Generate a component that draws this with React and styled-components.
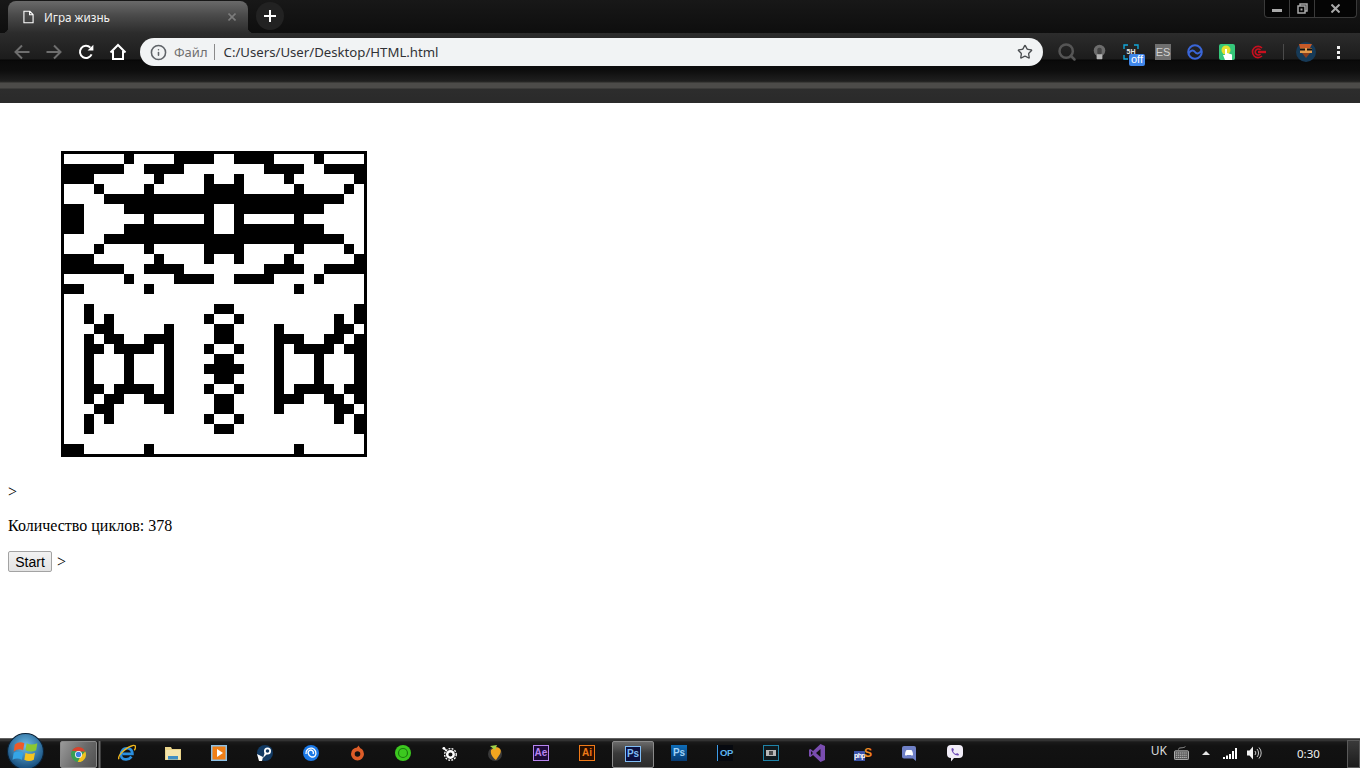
import React from 'react';
import styled, {createGlobalStyle} from 'styled-components';
import {Star, Search, Info} from 'lucide-react';

const GlobalStyle = createGlobalStyle`
    html, body {
        margin: 0;
        padding: 0;
        width: 1360px;
        height: 768px;
        overflow: hidden;
        background: #fff;
    }
`;

// black cells per row of the board, "a-b" is a range of columns
const BOARD = [
    '6 11-14 17-20 25',
    '0-5 8-11 20-23 26-29',
    '0-2 9 14 17 22 29',
    '3 8 14-17 23 28',
    '4-27',
    '0-1 6-14 17-25',
    '0-1 8 14 17 23',
    '0-1 6-14 17-25',
    '4-27',
    '3 8 14-17 23 28',
    '0-2 9 14 17 22 29',
    '0-5 8-11 20-23 26-29',
    '6 11-14 17-20 25',
    '0-1 8 23',
    '',
    '2 15-16 29',
    '2 4 14 17 27 29',
    '3-4 10 15-16 21 27-28',
    '2 4-5 8-10 15-16 21-23 26-27 29',
    '2-3 5-8 10 14 17 21 23-26 28-29',
    '2 6 10 15-16 21 25 29',
    '2 6 10 14-17 21 25 29',
    '2 6 10 15-16 21 25 29',
    '2-3 5-8 10 14 17 21 23-26 28-29',
    '2 4-5 8-10 15-16 21-23 26-27 29',
    '3-4 10 15-16 21 27-28',
    '2 4 14 17 27 29',
    '2 15-16 29',
    '',
    '0-1 8 23',
];

const expandRow = (row) => {
    const cells = new Array(30).fill(false);
    row.split(' ').filter(Boolean).forEach((part) => {
        const [from, to] = part.split('-').map(Number);
        for (let c = from; c <= (to === undefined ? from : to); c++) cells[c] = true;
    });
    return cells;
};

const Back = () => <svg width="18" height="18" viewBox="0 0 18 18" fill="none" stroke="currentColor" strokeWidth="2"><path d="M16.5 9H2.5M9 2.5L2.5 9L9 15.5"/></svg>;
const Forward = () => <svg width="18" height="18" viewBox="0 0 18 18" fill="none" stroke="currentColor" strokeWidth="2"><path d="M1.5 9H15.5M9 2.5L15.5 9L9 15.5"/></svg>;
const Reload = () => <svg width="16" height="16" viewBox="0 0 16 16" fill="none"><path d="M13.6 10.4A6.1 6.1 0 1 1 12.4 3.6" stroke="currentColor" strokeWidth="2"/><path d="M9.6 6.6H15.4V0.8Z" fill="currentColor"/></svg>;
const HomeIcon = () => <svg width="18" height="18" viewBox="0 0 18 18" fill="none" stroke="currentColor" strokeWidth="2"><path d="M1.5 9.5L9 2L16.5 9.5M4 8V16H14V8"/></svg>;
const PageIcon = () => <svg width="11" height="14" viewBox="0 0 12 14" fill="none" stroke="#fff" strokeWidth="1.2"><path d="M1 .8H7.5L11 4.3V13.2H1ZM7.2 .8V4.6H11"/></svg>;
const TabX = () => <svg width="8" height="8" viewBox="0 0 8 8" stroke="#7c7c7c" strokeWidth="1.6"><path d="M.5 .5L7.5 7.5M7.5 .5L.5 7.5"/></svg>;

const Bulb = () => <svg width="13" height="16" viewBox="0 0 18 20"><circle cx="9" cy="8" r="8" fill="#6c6c6c"/><rect x="6" y="4" width="6" height="10" rx="2.5" fill="#444"/><rect x="5" y="13" width="8" height="7" rx="1" fill="#b4b4b4"/></svg>;
const BlueRing = () => <svg width="16" height="16" viewBox="0 0 16 16" fill="none" stroke="#3a66d8" strokeWidth="2"><circle cx="8" cy="8" r="6.8"/><path d="M1.5 9.5C4 5.5 6.5 6 8 8S12 10.5 14.5 6.5"/></svg>;
const TapSquare = () => <svg width="16" height="16" viewBox="0 0 16 16"><rect width="16" height="16" rx="2" fill="#35c77a"/><circle cx="7" cy="6" r="4.5" fill="#e6e02e"/><path d="M6 5H8V9L13 10.5V16H6L4 11H6Z" fill="#fff"/></svg>;
const RedTarget = () => <svg width="16" height="14" viewBox="0 0 16 14" fill="none" stroke="#c80f1e" strokeWidth="1.6"><path d="M11 3A5.6 5.6 0 1 0 11 11"/><path d="M9.5 5A3 3 0 1 0 9.5 9"/><path d="M7 7H15" strokeWidth="2.4"/></svg>;
const Avatar = () => <svg width="20" height="20" viewBox="0 0 20 20"><circle cx="10" cy="10" r="10" fill="#173a57"/><path d="M3 2H16L14 6H4Z" fill="#c65a28"/><rect x="4" y="6" width="12" height="5" fill="#e49a4c"/><rect x="4" y="6.5" width="5" height="2" fill="#111"/><rect x="11" y="6.5" width="5" height="2" fill="#111"/><path d="M6 11H14L10 16Z" fill="#8a3d1e"/></svg>;
const Corners = () => <svg width="16" height="16" viewBox="0 0 16 16" fill="none" stroke="#12a5d8" strokeWidth="1.4"><path d="M1 5V1H5M11 1H15V5M15 11V15H11M5 15H1V11"/></svg>;

const Orb = () => <svg width="37" height="37" viewBox="0 0 36 36"><defs><radialGradient id="orb" cx="50%" cy="35%" r="70%"><stop offset="0" stopColor="#6cbdea"/><stop offset="1" stopColor="#0c3f6e"/></radialGradient></defs><circle cx="18" cy="18" r="17.5" fill="url(#orb)" stroke="#0a2136"/><g transform="translate(18 18) scale(1.15) translate(-18 -18)"><path d="M9 12Q13 9 17 11L16 17Q12 15 8 18Z" fill="#ee5a28"/><path d="M19 11Q23 13 28 11L27 17Q23 19 18 17Z" fill="#8cc832"/><path d="M8 19Q12 17 16 19L15 25Q11 23 7 25Z" fill="#35a5e6"/><path d="M18 19Q22 21 26 19L25 25Q21 27 17 25Z" fill="#f7c41f"/></g></svg>;
const ChromeLogo = () => <svg width="15" height="15" viewBox="0 0 18 18"><circle cx="9" cy="9" r="9" fill="#3a9e52"/><path d="M1.2 4.5A9 9 0 0 1 17.2 5.5H9Z" fill="#d9412f"/><path d="M17.2 5.5A9 9 0 0 1 8 18L11.5 11Z" fill="#f3c01f"/><circle cx="9" cy="9" r="4.2" fill="#fff"/><circle cx="9" cy="9" r="3.2" fill="#3f7fe0"/></svg>;
const IE = () => <svg width="18" height="18" viewBox="0 0 20 20" fill="none"><path d="M5 11H16C16 6 12 4 8 5C4 6 2 12 4 15C6 18 12 18 15 14" stroke="#2b8fde" strokeWidth="3"/><path d="M1 17C-1 12 10 3 17 1.5C21 1 19 6 18 7" stroke="#f0b71c" strokeWidth="1.5"/></svg>;
const Folder = () => <svg width="16" height="16" viewBox="0 0 16 16"><path d="M0 2H6L7 4H16V15H0Z" fill="#e9d48b"/><rect x="1" y="5" width="14" height="9.5" fill="#f4e6ae"/><path d="M3 11H13V14.5H3Z" fill="#3f8fc4"/></svg>;
const Media = () => <svg width="16" height="16" viewBox="0 0 16 16"><rect width="16" height="16" fill="#8cc0e6"/><rect x="1.5" y="1.5" width="13" height="13" fill="#f07f17"/><path d="M6 4L12 8L6 12Z" fill="#fff"/></svg>;
const Steam = () => <svg width="16" height="16" viewBox="0 0 16 16"><circle cx="8" cy="8" r="8" fill="#123a63"/><path d="M0 9L6 12L5 16H2Z" fill="#fff"/><circle cx="10.5" cy="6" r="3.5" fill="#fff"/><circle cx="10.5" cy="6" r="1.8" fill="#123a63"/><path d="M6 13L8 7L10 9Z" fill="#fff"/></svg>;
const Uplay = () => <svg width="16" height="16" viewBox="0 0 16 16" fill="none"><circle cx="8" cy="8" r="8" fill="#1a78e6"/><path d="M3 9A5 5 0 1 1 12 11A4 4 0 0 1 5.5 9A2.6 2.6 0 1 1 10 9" stroke="#fff" strokeWidth="1.3"/></svg>;
const Origin = () => <svg width="13" height="16" viewBox="0 0 14 16" fill="none"><circle cx="7" cy="9" r="5" stroke="#dc5c28" strokeWidth="4"/><path d="M8 0L10 3L6 3Z" fill="#dc5c28"/></svg>;
const GreenRing = () => <svg width="16" height="16" viewBox="0 0 16 16" fill="none"><circle cx="8" cy="8" r="8" fill="#3cc81f"/><circle cx="8" cy="8" r="4.5" stroke="#1b7a0e" strokeWidth="1.2"/></svg>;
const SteelSeries = () => <svg width="15" height="15" viewBox="0 0 16 16" fill="none"><circle cx="9" cy="9" r="3.5" stroke="#fff" strokeWidth="2.6"/><circle cx="9" cy="9" r="6.2" stroke="#fff" strokeWidth="1.4" strokeDasharray="2 1.3"/><circle cx="2" cy="2.5" r="1.5" fill="#fff"/><path d="M2 2.5L5 5.5" stroke="#fff" strokeWidth="1.5"/></svg>;
const FruityLoops = () => <svg width="14" height="16" viewBox="0 0 14 16"><circle cx="7" cy="9" r="7" fill="#3a3a3a"/><path d="M7 2C12 2 14 5 12 9L8 15C5 13 2 9 3 5Z" fill="#f2a51f"/><path d="M2 1L7 5L9 0Z" fill="#9fd24a"/></svg>;
const VisualStudio = () => <svg width="16" height="18" viewBox="0 0 16 18"><path d="M11.5 0L16 2V16L11.5 18L4 11L1.5 13L0 12.3V5.7L1.5 5L4 7ZM11.5 5L7 9L11.5 13ZM2 7V11L4 9Z" fill="#7a4db0" fillRule="evenodd"/></svg>;
const Film = () => <svg width="16" height="16" viewBox="0 0 16 16"><rect x=".5" y=".5" width="15" height="15" fill="#101a1e" stroke="#1e83a8"/><rect x="3" y="5" width="10" height="6" fill="#b8b8b8"/><rect x="6" y="6" width="4" height="4" fill="#4a4a4a"/></svg>;
const Discord = () => <svg width="14" height="15" viewBox="0 0 14 15"><path d="M2 0H12A2 2 0 0 1 14 2V15L11 12.5H2A2 2 0 0 1 0 10.5V2A2 2 0 0 1 2 0Z" fill="#6f80c6"/><path d="M3 9C3 6 4 4 5 4H9C10 4 11 6 11 9C10 10 9.5 9.5 9 9H5C4.5 9.5 4 10 3 9Z" fill="#fff"/></svg>;
const Viber = () => <svg width="16" height="17" viewBox="0 0 16 17" fill="none"><path d="M4 0H12A4 4 0 0 1 16 4V9A4 4 0 0 1 12 13H7L4 16.5V13A4 4 0 0 1 0 9V4A4 4 0 0 1 4 0Z" fill="#f1edf8"/><path d="M4.5 3.5L6 3L7 5L6 6C6.5 7.5 7.5 8.5 9 9L10 8L12 9.2L11.5 10.5C8 11 4 7 4.5 3.5Z" fill="#6e4bb5"/></svg>;
const Keyboard = () => <svg width="15" height="14" viewBox="0 0 17 16"><path d="M5 4C5 1 11 3 13 .5" stroke="#a8a8a8" fill="none"/><rect x=".5" y="5.5" width="16" height="10" rx="1" fill="#555" stroke="#bdbdbd"/><path d="M2 8H15M2 10.5H15M2 13H15" stroke="#d4d4d4" strokeDasharray="1.5 .7"/></svg>;
const Signal = () => <svg width="15" height="11" viewBox="0 0 15 11" fill="#fff"><rect y="9" width="2" height="2"/><rect x="3" y="7.5" width="2" height="3.5"/><rect x="6" y="6" width="2" height="5"/><rect x="9" y="3" width="2" height="8"/><rect x="12" width="2" height="11"/></svg>;
const Speaker = () => <svg width="15" height="14" viewBox="0 0 15 14" fill="none"><path d="M0 4.5H2.5L6 .5V13.5L2.5 9.5H0Z" fill="#f2f2f2"/><path d="M8 5A3 3 0 0 1 8 9M10 3A6 6 0 0 1 10 11M12 1.5A8 8 0 0 1 12 12.5" stroke="#c9c9c9"/></svg>;

const Game = () => (
    <Board>
        {BOARD.map((row, r) => expandRow(row).map((on, c) => <Cell key={r + '-' + c} $on={on}/>))}
    </Board>
);

const TaskList = () => {
    const icons = [
        <IE/>, <Folder/>, <Media/>, <Steam/>, <Uplay/>, <Origin/>, <GreenRing/>, <SteelSeries/>, <FruityLoops/>,
        <AppBadge $color="#b784f0" $bg="#1f0b3a">Ae</AppBadge>,
        <AppBadge $color="#f07a18" $bg="#2a0f00">Ai</AppBadge>,
        <ActiveTask $w="42px"><AppBadge $color="#7fbdf5" $bg="#0b1040">Ps</AppBadge></ActiveTask>,
        <FilledBadge>Ps</FilledBadge>,
        <OpBadge>OP</OpBadge>,
        <Film/>, <VisualStudio/>,
        <PhpMark><PhpText>php</PhpText><PhpS>S</PhpS></PhpMark>,
        <Discord/>, <Viber/>,
    ];
    return <TaskIcons>{icons.map((icon, i) => <TaskSlot key={i}>{icon}</TaskSlot>)}</TaskIcons>;
};

export default function App() {
    return (
        <Window>
            <GlobalStyle/>
            <TitleBar>
                <Tab>
                    <PageIcon/>
                    <TabTitle>Игра жизнь</TabTitle>
                    <TabX/>
                </Tab>
                <NewTab>
                    <svg width="12" height="12" viewBox="0 0 12 12" stroke="#fff" strokeWidth="2"><path d="M6 0V12M0 6H12"/></svg>
                </NewTab>
                <WindowControls>
                    <WinButton $w="24px"><MinGlyph/></WinButton>
                    <WinButton $w="24px">
                        <svg width="11" height="11" viewBox="0 0 11 11" fill="none" stroke="#a9a9a9" strokeWidth="1.5"><path d="M3 3V1H10V8H8"/><rect x="1" y="3" width="7" height="7"/><rect x="3.5" y="5.5" width="2" height="2" fill="#a9a9a9" stroke="none"/></svg>
                    </WinButton>
                    <WinButton $w="41px">
                        <svg width="9" height="9" viewBox="0 0 9 9" stroke="#a9a9a9" strokeWidth="2"><path d="M.5 .5L8.5 8.5M8.5 .5L.5 8.5"/></svg>
                    </WinButton>
                </WindowControls>
            </TitleBar>

            <Toolbar>
                <NavButton $dim><Back/></NavButton>
                <NavButton $dim><Forward/></NavButton>
                <NavButton><Reload/></NavButton>
                <NavButton><HomeIcon/></NavButton>
                <Omnibox>
                    <Info size={17} color="#5f6368" strokeWidth={2.2}/>
                    <SecurityLabel>Файл</SecurityLabel>
                    <Divider/>
                    <UrlText>C:/Users/User/Desktop/HTML.html</UrlText>
                    <StarWrap><Star size={16} color="#4a4d50" strokeWidth={2}/></StarWrap>
                </Omnibox>
                <Extensions>
                    <ExtSlot><Search size={20} color="#555" strokeWidth={3}/></ExtSlot>
                    <ExtSlot><Bulb/></ExtSlot>
                    <ExtSlot>
                        <FiveBox><Corners/><FiveText>5H</FiveText></FiveBox>
                        <OffBadge>off</OffBadge>
                    </ExtSlot>
                    <ExtSlot><EsBox>ES</EsBox></ExtSlot>
                    <ExtSlot><BlueRing/></ExtSlot>
                    <ExtSlot><TapSquare/></ExtSlot>
                    <ExtSlot><RedTarget/></ExtSlot>
                    <ExtDivider/>
                    <AvatarSlot><Avatar/></AvatarSlot>
                    <MenuDots><i/><i/><i/></MenuDots>
                </Extensions>
            </Toolbar>

            <BookmarkBar/>

            <Page>
                <Game/>
                <Para>&gt;</Para>
                <Para>Количество циклов: 378</Para>
                <ButtonRow><StartButton>Start</StartButton> &gt;</ButtonRow>
            </Page>

            <Taskbar>
                <StartOrb><Orb/></StartOrb>
                <ActiveTask $w="37px" $light><ChromeLogo/></ActiveTask>
                <TaskDivider/>
                <TaskList/>
                <Tray>
                    <TrayText>UK</TrayText>
                    <TrayIcon $w="30px"><Keyboard/></TrayIcon>
                    <TrayIcon $w="20px"><TrayArrow/></TrayIcon>
                    <TrayIcon $w="28px"><Signal/></TrayIcon>
                    <TrayIcon $w="20px"><Speaker/></TrayIcon>
                    <Clock>0:30</Clock>
                    <ShowDesktop/>
                </Tray>
            </Taskbar>
        </Window>
    );
}

const Window = styled.div`
    width: 1360px;
    height: 768px;
    display: flex;
    flex-direction: column;
    overflow: hidden;
    background: #fff;
`
const TitleBar = styled.div`
    height: 33px;
    flex: none;
    display: flex;
    align-items: flex-end;
    padding-left: 8px;
    position: relative;
    background: linear-gradient(#181818, #0e0e0e);
`
const Tab = styled.div`
    width: 240px;
    height: 32px;
    box-sizing: border-box;
    display: flex;
    align-items: center;
    padding: 0 12px 0 15px;
    border-radius: 8px 8px 0 0;
    position: relative;
    background: linear-gradient(#6a6a6a, #4a4a4a 45%, #2c2c2c);
    &::before, &::after {
        content: "";
        position: absolute;
        bottom: 0;
        width: 6px;
        height: 6px;
    }
    &::before {
        left: -6px;
        background: radial-gradient(circle at 0 0, transparent 6px, #2c2c2c 6.5px);
    }
    &::after {
        right: -6px;
        background: radial-gradient(circle at 100% 0, transparent 6px, #2c2c2c 6.5px);
    }
`
const TabTitle = styled.span`
    margin-left: 10px;
    color: #f2f2f2;
    font: 11.7px "Noto Sans", sans-serif;
    flex: 1;
`
const NewTab = styled.div`
    width: 28px;
    height: 28px;
    margin: 0 0 3px 8px;
    border-radius: 50%;
    background: #222;
    display: flex;
    align-items: center;
    justify-content: center;
`
const WindowControls = styled.div`
    position: absolute;
    top: 0;
    right: 3px;
    height: 17px;
    display: flex;
    background: #050505;
    border: 1px solid #3a3a3a;
    border-top: none;
    border-radius: 0 0 4px 4px;
`
const WinButton = styled.div`
    width: ${props => props.$w};
    display: flex;
    align-items: center;
    justify-content: center;
    & + & {
        border-left: 1px solid #3a3a3a;
    }
`
const MinGlyph = styled.div`
    width: 10px;
    height: 3px;
    margin-top: 3px;
    background: #a9a9a9;
`
const Toolbar = styled.div`
    height: 38px;
    flex: none;
    display: flex;
    align-items: flex-start;
    padding: 5px 0 0 6px;
    box-sizing: border-box;
    background: linear-gradient(#2c2c2c, #1c1c1c 26px, #050505 27px, #0a0a0a 28px, #0e0e0e);
`
const NavButton = styled.div`
    width: 32px;
    height: 28px;
    display: flex;
    align-items: center;
    justify-content: center;
    color: ${props => props.$dim ? '#6e6e6e' : '#fff'};
`
const Omnibox = styled.div`
    width: 903px;
    height: 28px;
    margin-left: 6px;
    box-sizing: border-box;
    padding: 0 10px 0 10px;
    display: flex;
    align-items: center;
    background: #f1f3f4;
    border-radius: 14px;
`
const SecurityLabel = styled.span`
    margin-left: 7px;
    color: #6f6f6f;
    font: 13px "Noto Sans", sans-serif;
`
const Divider = styled.div`
    width: 1px;
    height: 16px;
    margin: 0 9px 0 6px;
    background: #8a8a8a;
`
const UrlText = styled.span`
    flex: 1;
    color: #303236;
    font: 13.2px "Noto Sans", sans-serif;
`
const StarWrap = styled.div`
    display: flex;
`
const Extensions = styled.div`
    display: flex;
    align-items: center;
    height: 28px;
    margin-left: 8px;
`
const ExtSlot = styled.div`
    width: 32px;
    height: 28px;
    position: relative;
    display: flex;
    align-items: center;
    justify-content: center;
`
const FiveBox = styled.div`
    width: 16px;
    height: 16px;
    position: relative;
    svg {
        display: block;
    }
`
const FiveText = styled.span`
    position: absolute;
    inset: 0;
    color: #e8e8e8;
    font: bold 7px/15px "Liberation Sans", sans-serif;
    text-align: center;
`
const OffBadge = styled.span`
    position: absolute;
    left: 14px;
    top: 16px;
    width: 16px;
    height: 12px;
    border-radius: 2px;
    background: #3f86ea;
    color: #fff;
    font: 11px/11px "Liberation Sans", sans-serif;
    text-align: center;
`
const EsBox = styled.div`
    width: 16px;
    height: 16px;
    background: #6f6f6f;
    color: #d2d2d2;
    font: 11px/16px "Liberation Sans", sans-serif;
    text-align: center;
`
const ExtDivider = styled.div`
    width: 1px;
    height: 16px;
    margin-left: 8px;
    background: #4a4a4a;
`
const AvatarSlot = styled.div`
    width: 20px;
    height: 20px;
    margin-left: 12px;
`
const MenuDots = styled.div`
    width: 3px;
    margin-left: 21px;
    display: flex;
    flex-direction: column;
    gap: 2px;
    i {
        display: block;
        width: 3px;
        height: 3px;
        background: #eee;
    }
`
const BookmarkBar = styled.div`
    height: 32px;
    flex: none;
    background: linear-gradient(#0e0e0e, #1f1f1f 10px, #2a2a28 11px, #4c4b49 12px, #4c4b49 17px, #2d2d2d 18px, #2a2a2a);
`
const Page = styled.div`
    flex: 1;
    min-height: 0;
    padding: 48px 8px 0;
    font: 16px/18px "Liberation Serif", serif;
    color: #000;
`
const Board = styled.div`
    width: 300px;
    height: 300px;
    margin: 0 0 26px 53px;
    border: 3px solid #000;
    display: grid;
    grid-template-columns: repeat(30, 10px);
    grid-template-rows: repeat(30, 10px);
`
const Cell = styled.div`
    background: ${props => props.$on ? '#000' : '#fff'};
`
const Para = styled.p`
    margin: 0 0 16px;
`
const ButtonRow = styled.div`
    display: flex;
    align-items: center;
    gap: 5px;
`
const StartButton = styled.button`
    width: 44px;
    height: 21px;
    padding: 0;
    border: 1px solid #a3a3a3;
    border-radius: 2px;
    background: linear-gradient(#f2f2f2, #e3e3e3);
    color: #000;
    font: 14px "Liberation Sans", sans-serif;
`
const Taskbar = styled.div`
    height: 30px;
    flex: none;
    display: flex;
    align-items: center;
    position: relative;
    padding-left: 60px;
    box-sizing: border-box;
    background: linear-gradient(#9a9a9a, #2a2a2a 1px, #3a3a3a 2px, #1a1a1a 4px, #121212 8px, #101010);
`
const StartOrb = styled.div`
    position: absolute;
    left: 7px;
    top: -5px;
`
const ActiveTask = styled.div`
    width: ${props => props.$w};
    height: 27px;
    margin-top: 2px;
    display: flex;
    align-items: center;
    justify-content: center;
    box-sizing: border-box;
    border: 1px solid #8a8a8a;
    border-radius: 2px;
    background: ${props => props.$light
        ? 'linear-gradient(120deg, #9a9a9a, #6a6a6a 55%, #505050)'
        : 'linear-gradient(#6a6a6a, #3a3a3a 45%, #2a2a2a)'};
    flex: none;
`
const TaskDivider = styled.div`
    width: 3px;
    height: 27px;
    margin: 2px 3px 0 1px;
    background: linear-gradient(90deg, #2a2a2a, #6a6a6a, #2a2a2a);
    flex: none;
`
const TaskIcons = styled.div`
    display: flex;
    flex: none;
`
const TaskSlot = styled.div`
    width: 46px;
    height: 28px;
    display: flex;
    align-items: center;
    justify-content: center;
`
const AppBadge = styled.div`
    width: 16px;
    height: 16px;
    box-sizing: border-box;
    border: 1px solid ${props => props.$color};
    background: ${props => props.$bg};
    color: ${props => props.$color};
    font: bold 10px/14px "Liberation Sans", sans-serif;
    text-align: center;
`
const FilledBadge = styled.div`
    width: 16px;
    height: 16px;
    background: linear-gradient(#0e6db8, #053a72);
    color: #9fd0f5;
    font: bold 10px/16px "Liberation Sans", sans-serif;
    text-align: center;
`
const OpBadge = styled.div`
    width: 16px;
    height: 16px;
    box-sizing: border-box;
    padding-left: 2px;
    border-left: 1px solid #3c9be6;
    background: #06090f;
    color: #5db4ee;
    font: bold 9.5px/16px "Liberation Sans", sans-serif;
    letter-spacing: -0.5px;
`
const PhpMark = styled.div`
    display: flex;
    align-items: flex-end;
    height: 16px;
`
const PhpText = styled.span`
    color: #fff;
    background: #3a52a8;
    font: bold 7px/10px "Liberation Sans", sans-serif;
    letter-spacing: -0.6px;
`
const PhpS = styled.span`
    color: #ef8a24;
    font: bold 12px/16px "Liberation Sans", sans-serif;
    margin-left: -1px;
`
const Tray = styled.div`
    position: absolute;
    right: 0;
    top: 0;
    height: 30px;
    display: flex;
    align-items: center;
    color: #dcdcdc;
`
const TrayText = styled.span`
    margin-right: -1px;
    margin-top: -5px;
    font: 12px "Noto Sans", sans-serif;
`
const TrayIcon = styled.div`
    width: ${props => props.$w};
    display: flex;
    align-items: center;
    justify-content: center;
`
const TrayArrow = styled.div`
    width: 0;
    height: 0;
    border-left: 4px solid transparent;
    border-right: 4px solid transparent;
    border-bottom: 4px solid #e6e6e6;
`
const Clock = styled.span`
    width: 83px;
    padding-left: 33px;
    box-sizing: border-box;
    color: #f0f0f0;
    font: 11.5px "Noto Sans", sans-serif;
`
const ShowDesktop = styled.div`
    width: 13px;
    height: 28px;
    margin-top: 2px;
    box-sizing: border-box;
    border: 1px solid #5a5a5a;
    background: linear-gradient(#3a3a3a, #1c1c1c);
`
